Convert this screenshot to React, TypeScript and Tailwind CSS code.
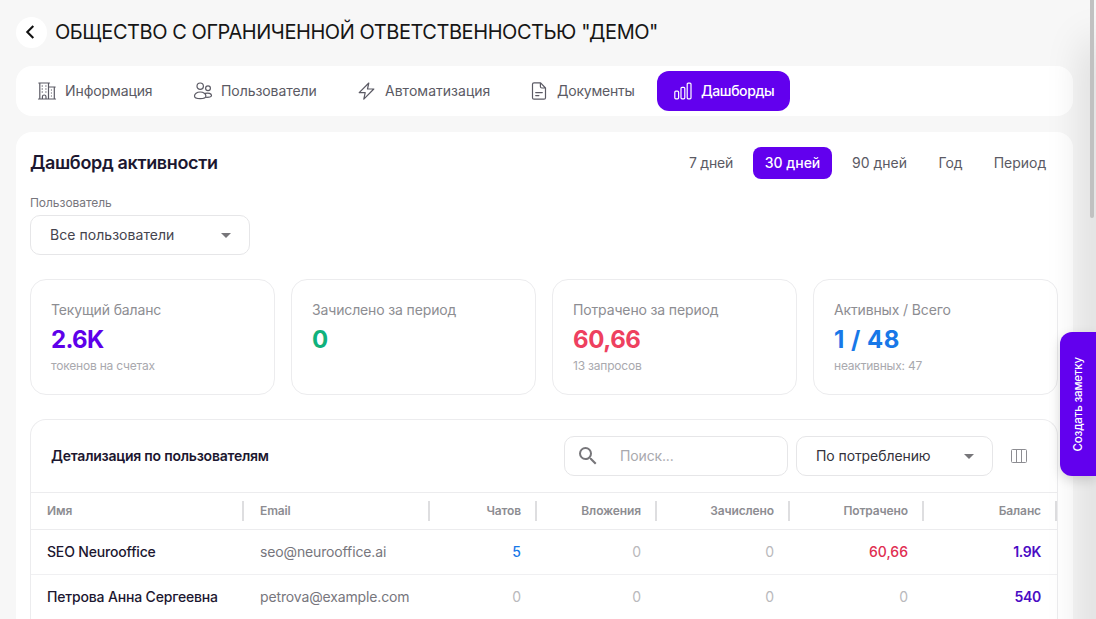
import { useState } from "react";
import type { ReactNode } from "react";
import clsx from "clsx";
import { MdArrowDropDown, MdSearch } from "react-icons/md";

const tabs = [
  { label: "Информация", icon: <BuildingIcon />, size: "w-[152px] tracking-[-0.1px]" },
  { label: "Пользователи", icon: <UsersIcon />, size: "w-[160px] tracking-[-0.06px]" },
  { label: "Автоматизация", icon: <BoltIcon />, size: "w-[168px] tracking-[0.02px]" },
  { label: "Документы", icon: <DocumentIcon />, size: "w-[140px] tracking-[-0.22px]" },
  { label: "Дашборды", icon: <ChartIcon />, size: "w-[133px] tracking-[-0.4px]" },
];

const periods = [
  { label: "7 дней", size: "w-[68px] tracking-[-0.2px]" },
  { label: "30 дней", size: "w-[79px]" },
  { label: "90 дней", size: "w-[79px]" },
  { label: "Год", size: "w-[47px]" },
  { label: "Период", size: "w-[76px]" },
];

const stats = [
  { label: "Текущий баланс", value: "2.6K", note: "токенов на счетах", color: "text-[#5e00ea] tracking-[-0.7px]" },
  { label: "Зачислено за период", value: "0", note: "", color: "text-[#10b27c]" },
  { label: "Потрачено за период", value: "60,66", note: "13 запросов", color: "text-[#ee405f] tracking-[-0.4px]" },
  { label: "Активных / Всего", value: "1 / 48", note: "неактивных: 47", color: "text-[#1878e8] tracking-[0.5px]" },
];

const columns = ["Имя", "Email", "Чатов", "Вложения", "Зачислено", "Потрачено", "Баланс"];

const rows = [
  ["SEO Neurooffice", "seo@neurooffice.ai", "5", "0", "0", "60,66", "1.9K"],
  ["Петрова Анна Сергеевна", "petrova@example.com", "0", "0", "0", "0", "540"],
];

const grid = "grid grid-cols-[213px_186px_107px_120px_133px_134px_133px]";

const cellColor = (value: string, col: number) => {
  if (col === 0) return "font-medium tracking-[-0.17px] text-[#1c1730]";
  if (col === 1) return "tracking-[-0.14px] text-[#77767d]";
  if (value === "0") return "text-[#b9b9bc]";
  if (col === 2) return "font-medium text-[#1878e8]";
  if (col === 5) return "font-medium text-[#e02d50]";
  return "font-semibold tracking-[-0.3px] text-[#4a0bc4]";
};

function Svg({ children }: { children: ReactNode }) {
  return (
    <svg
      width="20"
      height="20"
      viewBox="0 0 20 20"
      fill="none"
      stroke="currentColor"
      strokeWidth="1.2"
      strokeLinejoin="round"
      strokeLinecap="round"
      className="shrink-0"
    >
      {children}
    </svg>
  );
}

function BuildingIcon() {
  return (
    <Svg>
      <path d="M1.5 18h17M1.8 2h10.7M2.8 2v16M11.5 2v16M11.5 6h6.7M17.3 6v12M5.4 18v-2.2a1.8 1.8 0 0 1 3.6 0V18" />
      <path
        strokeWidth="1"
        d="M5 5h.6M8.6 5h.6M5 8h.6M8.6 8h.6M5 11h.6M8.6 11h.6M14.3 9h.3M14.3 12h.3M14.3 15h.3"
      />
    </Svg>
  );
}

function UsersIcon() {
  return (
    <Svg>
      <circle cx="7.2" cy="5.2" r="3.2" />
      <circle cx="15" cy="7.2" r="2.4" />
      <path d="M7.2 11c-3.4 0-5.7 1.8-5.7 4 0 2.1 2.3 2.7 5.7 2.7s5.7-.6 5.7-2.7c0-2.2-2.3-4-5.7-4zM12.2 12.4c3.2-1 6.3.3 6.3 2.2 0 1.4-1.6 1.8-4.8 1.8" />
    </Svg>
  );
}

function BoltIcon() {
  return (
    <Svg>
      <path d="M11.8 2 2.2 11.6h6L6.8 18.2l10-10.2h-6.3z" />
    </Svg>
  );
}

function DocumentIcon() {
  return (
    <Svg>
      <path d="M11.6 1.8H5a1.5 1.5 0 0 0-1.5 1.5v13.4A1.5 1.5 0 0 0 5 18.2h10a1.5 1.5 0 0 0 1.5-1.5V7zM11.4 1.8v3.7A1.5 1.5 0 0 0 12.9 7h3.6M6.7 11.6h6.6M6.7 14.6h3.2" />
    </Svg>
  );
}

function ChartIcon() {
  return (
    <Svg>
      <rect x="1.8" y="10.2" width="3.8" height="7.6" rx="1" />
      <rect x="8" y="6.3" width="3.8" height="11.5" rx="1" />
      <rect x="14.2" y="2.2" width="3.8" height="15.6" rx="1" />
    </Svg>
  );
}

export default function App() {
  const [tab, setTab] = useState("Дашборды");
  const [period, setPeriod] = useState("30 дней");
  const [search, setSearch] = useState("");

  return (
    <div className="relative h-[619px] w-[1096px] overflow-hidden bg-[#f7f7f7] pl-4 font-[Inter,'Noto_Sans',sans-serif] text-sm">
      <header className="flex h-16 items-center gap-2">
        <button className="flex size-[31px] items-center justify-center rounded-full bg-white pr-[3px]">
          <svg width="12" height="14" viewBox="0 0 12 14" fill="none" stroke="#111" strokeWidth="2.1">
            <path d="M9.3 1 3.3 7l6 6" />
          </svg>
        </button>
        <h1 className="whitespace-nowrap text-[20px] tracking-[-0.44px] text-[#161616]">
          ОБЩЕСТВО С ОГРАНИЧЕННОЙ ОТВЕТСТВЕННОСТЬЮ "ДЕМО"
        </h1>
      </header>

      <nav className="mt-0.5 flex h-[50px] w-[1057px] items-center gap-1 rounded-2xl bg-white pl-[5px]">
        {tabs.map(({ label, icon, size }) => (
          <button
            key={label}
            onClick={() => setTab(label)}
            className={clsx(
              "flex h-10 shrink-0 items-center gap-2 whitespace-nowrap rounded-xl pl-4",
              size,
              tab === label ? "bg-[#6200ee] font-medium text-white" : "text-[#5b5a64]",
            )}
          >
            {icon}
            {label}
          </button>
        ))}
      </nav>

      <main className="mt-4 h-[500px] w-[1057px] rounded-t-2xl bg-white px-3.5 pt-[15px]">
        <div className="flex h-8 w-[1028px] items-center justify-between">
          <h2 className="text-lg font-semibold tracking-[-0.35px] text-[#1c1730]">Дашборд активности</h2>
          <div className="flex gap-2">
            {periods.map(({ label, size }) => (
              <button
                key={label}
                onClick={() => setPeriod(label)}
                className={clsx(
                  "h-8 rounded-lg",
                  size,
                  period === label ? "bg-[#6200ee] font-medium text-white" : "text-[#5b5a64]",
                )}
              >
                {label}
              </button>
            ))}
          </div>
        </div>

        <div className="mt-4 flex w-[220px] flex-col gap-1">
          <label className="text-xs tracking-[-0.05px] text-[#77767d]">Пользователь</label>
          <button className="flex h-10 items-center justify-between rounded-[10px] border border-[#e6e6e8] pl-[19px] pr-[11px] tracking-[0.05px] text-[#45444e]">
            Все пользователи
            <MdArrowDropDown className="size-6 text-[#77767a]" />
          </button>
        </div>

        <div className="mt-6 grid w-[1028px] grid-cols-4 gap-4">
          {stats.map(({ label, value, note, color }) => (
            <div key={label} className="h-[116px] rounded-2xl border border-[#ececee] px-5 pt-5">
              <p className="leading-5 tracking-[-0.14px] text-[#8d8d92]">{label}</p>
              <p className={clsx("mt-1 text-2xl font-bold leading-8", color)}>{value}</p>
              <p className="mt-0.5 text-xs leading-4 tracking-[-0.2px] text-[#a9a9ae]">{note}</p>
            </div>
          ))}
        </div>

        <section className="mt-6 w-[1028px] rounded-t-2xl border border-b-0 border-[#ececee]">
          <div className="flex h-[72px] items-center pl-5 pr-7">
            <h3 className="grow font-semibold tracking-[-0.23px] text-[#1c1730]">Детализация по пользователям</h3>
            <div className="flex h-10 w-56 items-center rounded-[10px] border border-[#e6e6e8] pl-[11px]">
              <MdSearch className="size-6 shrink-0 text-[#77767a]" />
              <input
                value={search}
                onChange={(e) => setSearch(e.target.value)}
                placeholder="Поиск..."
                className="ml-5 w-36 tracking-[-0.15px] outline-none placeholder:text-[#a9a9ae]"
              />
            </div>
            <button className="ml-2 flex h-10 w-[197px] items-center justify-between rounded-[10px] border border-[#e6e6e8] pl-[19px] pr-[11px] tracking-[-0.08px] text-[#33323c]">
              По потреблению
              <MdArrowDropDown className="size-6 text-[#77767a]" />
            </button>
            <svg width="20" height="20" viewBox="0 0 20 20" fill="none" stroke="#8d8d92" className="ml-4">
              <rect x="2.5" y="3.5" width="15" height="13" rx="1" />
              <path d="M7.5 3.5v13M12.5 3.5v13" />
            </svg>
          </div>
          <div className={clsx(grid, "h-[38px] items-center border-y border-[#ececee]")}>
            {columns.map((name, i) => (
              <div
                key={name}
                className={clsx(
                  "flex h-5 items-center border-r-2 border-[#dedee0] pl-4 pr-3.5 text-xs font-semibold tracking-[-0.12px] text-[#8d8d92]",
                  i > 1 && "justify-end",
                )}
              >
                {name}
              </div>
            ))}
          </div>
          {rows.map((row) => (
            <div key={row[0]} className={clsx(grid, "h-[45px] items-center border-b border-[#f0f0f2]")}>
              {row.map((value, i) => (
                <div
                  key={i}
                  className={clsx("whitespace-nowrap px-4", i > 1 && "text-right", cellColor(value, i))}
                >
                  {value}
                </div>
              ))}
            </div>
          ))}
        </section>
      </main>

      {/* shade of the closed side drawer */}
      <div className="pointer-events-none absolute -right-2 top-[50px] h-[700px] w-2 shadow-[0_0_40px_8px_rgba(0,0,0,0.17)]" />
      <div className="absolute right-0.5 top-0 h-[218px] w-1 rounded-b-full bg-[#c1c1c1]" />
      <button className="absolute right-0 top-[332px] flex h-36 w-9 items-center justify-center rounded-l-xl bg-[#6200ee] shadow-[0_4px_12px_rgba(0,0,0,0.15)]">
        <span className="rotate-180 whitespace-nowrap text-[11.5px] font-medium tracking-[-0.18px] text-white [writing-mode:vertical-rl]">
          Создать заметку
        </span>
      </button>
    </div>
  );
}
